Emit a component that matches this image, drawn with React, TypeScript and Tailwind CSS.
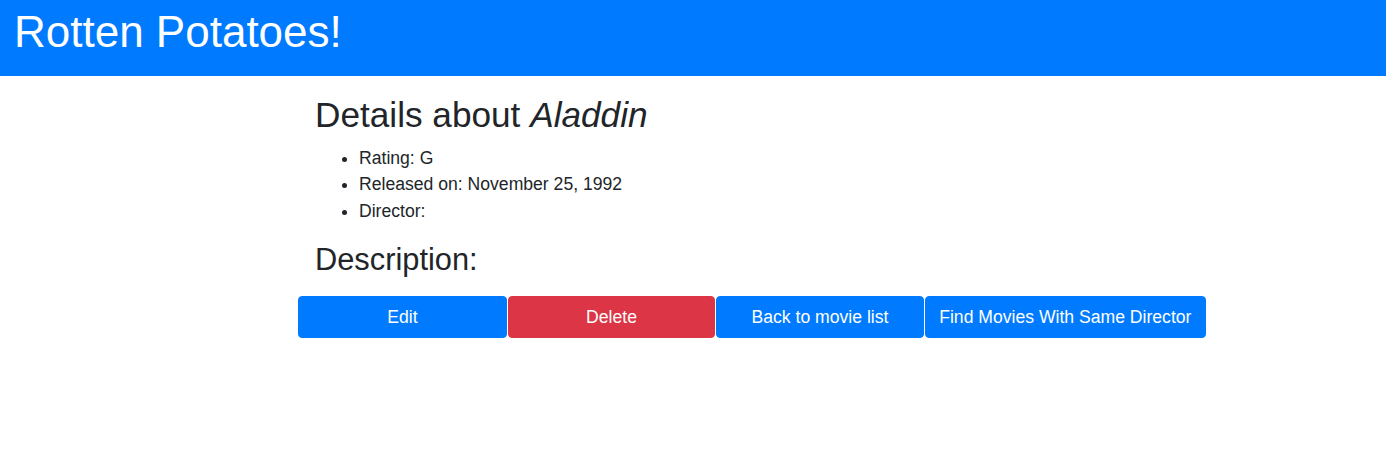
export default function App() {
  return (
    <div className="min-h-screen bg-white text-[#212529] font-['Liberation_Sans',Arial,sans-serif]">
      <header className="h-[76px] bg-[#007bff] pl-[14px] pt-[6px]">
        <h1 className="text-[44px] leading-[1.2] text-white">Rotten Potatoes!</h1>
      </header>

      <main className="pl-[298px] pt-[18px]">
        <div className="pl-[17px]">
          <h2 className="mb-[8.8px] text-[35.2px] leading-[1.2]">
            Details about <em>Aladdin</em>
          </h2>
          <ul className="mb-[17.6px] list-disc pl-[44px] text-[17.6px] leading-[1.5]">
            <li>Rating: G</li>
            <li>Released on: November 25, 1992</li>
            <li>Director:</li>
          </ul>
          <h3 className="mb-[8.8px] text-[30.8px] leading-[1.2]">Description:</h3>
        </div>

        <div className="mt-[17px] flex gap-px text-[17.6px] leading-[1.5] text-white">
          <button className="w-[209px] rounded-[4px] border border-[#007bff] bg-[#007bff] py-[7px]">
            Edit
          </button>
          <button className="w-[207px] rounded-[4px] border border-[#dc3545] bg-[#dc3545] py-[7px]">
            Delete
          </button>
          <button className="w-[208px] rounded-[4px] border border-[#007bff] bg-[#007bff] py-[7px]">
            Back to movie list
          </button>
          <button className="rounded-[4px] border border-[#007bff] bg-[#007bff] px-[13.2px] py-[7px]">
            Find Movies With Same Director
          </button>
        </div>
      </main>
    </div>
  )
}
